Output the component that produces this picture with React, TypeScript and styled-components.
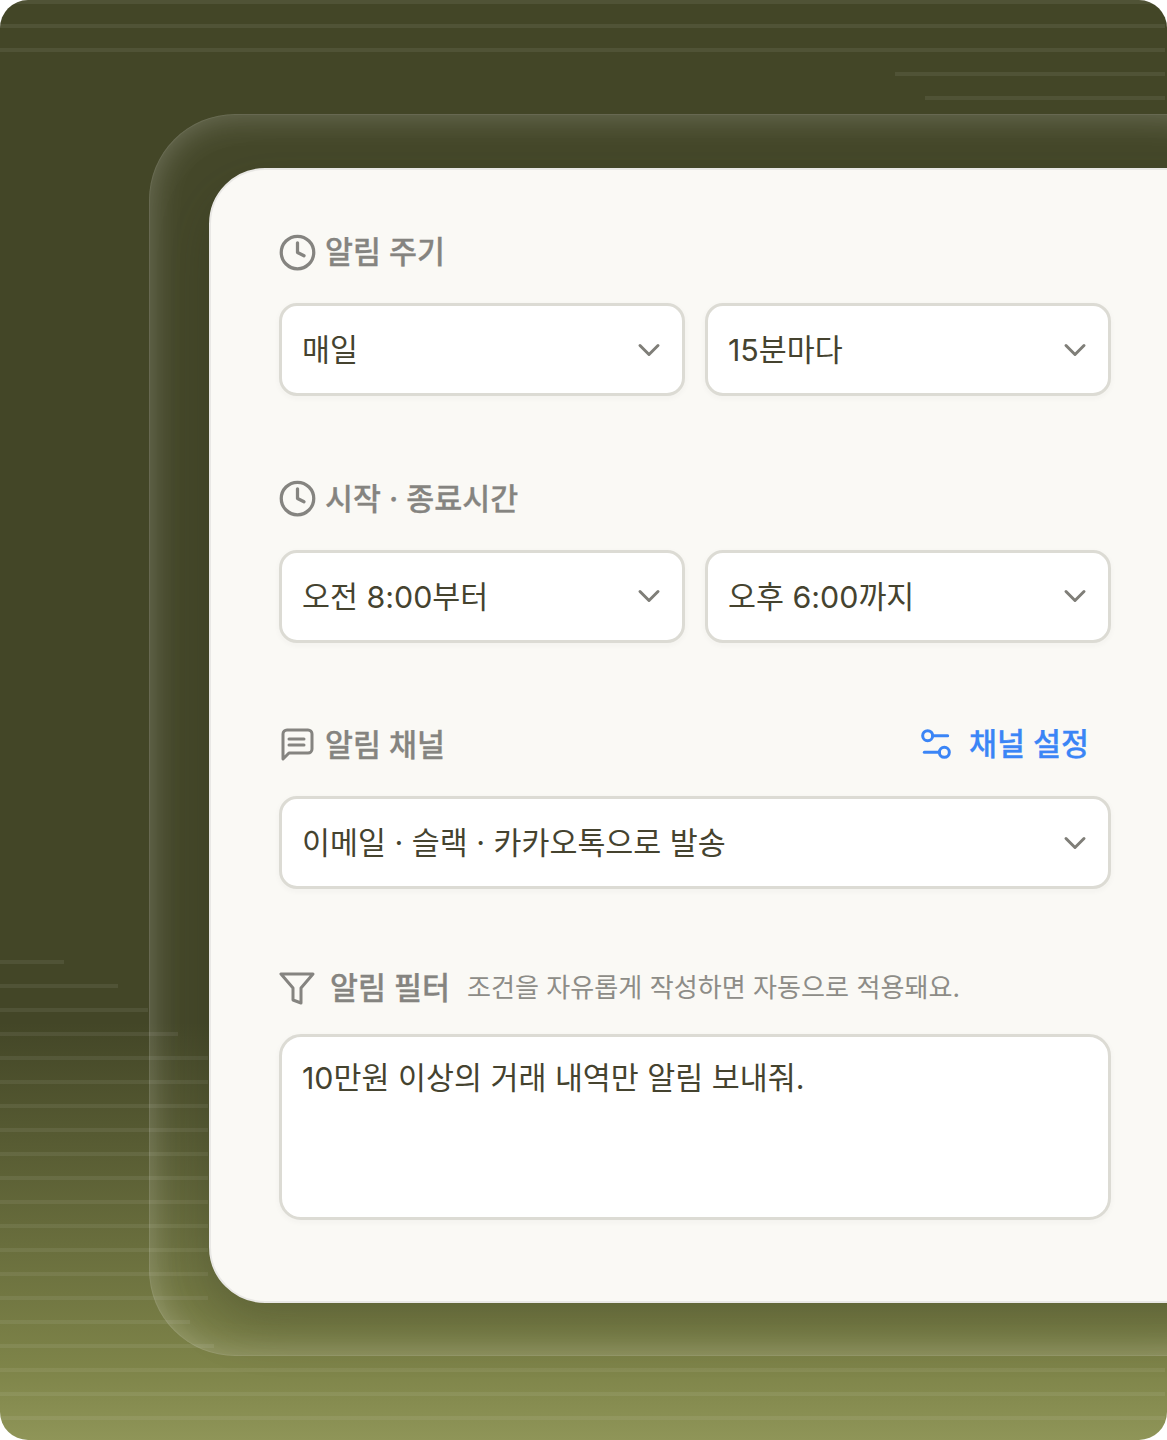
import React from "react";
import styled, { createGlobalStyle } from "styled-components";
import { ChevronDown, Clock, Settings2 } from "lucide-react";

const Global = createGlobalStyle`
  html, body { margin: 0; padding: 0; background: #fff; }
  * { box-sizing: border-box; }
  body { font-family: Inter, "Noto Sans CJK KR", sans-serif; }
`;

const Scene = styled.div`
  position: relative;
  width: 1167px;
  height: 1440px;
  border-radius: 28px;
  overflow: hidden;
  padding: 114px 0 0 149px;
  background: linear-gradient(180deg, #434627 0%, #434627 71%, #7e8449 95%, #8f9558 100%);
`;

const Stripes = styled.div`
  position: absolute;
  inset: 0;
  display: flex;
  flex-direction: column;
  padding-right: 2px;
`;

const Stripe = styled.div<{ $left?: number; $width?: number; $top?: number }>`
  height: 4px;
  flex: none;
  margin-top: ${(p) => p.$top ?? 20}px;
  margin-left: ${(p) => p.$left ?? 0}px;
  width: ${(p) => (p.$width ? `${p.$width}px` : "auto")};
  background: rgba(255, 255, 255, 0.07);
`;

const Glass = styled.div`
  position: relative;
  width: 1100px;
  height: 1242px;
  padding: 54px 0 0 60px;
  border-radius: 86px;
  background: rgba(255, 255, 255, 0.015);
  box-shadow: inset 0 0 34px rgba(255, 255, 255, 0.26), inset 0 0 0 1px rgba(255, 255, 255, 0.07);
`;

const Card = styled.div`
  width: 1060px;
  height: 1135px;
  padding: 59px 0 0 68px;
  border-radius: 56px;
  background: #faf9f5;
  border: 2px solid #e9e8e5;
  box-shadow: 0 22px 50px rgba(40, 44, 20, 0.28);
  display: flex;
  flex-direction: column;
`;

const Section = styled.section<{ $gap?: number; $bottom?: number }>`
  width: 832px;
  display: flex;
  flex-direction: column;
  gap: ${(p) => p.$gap ?? 30}px;
  margin-bottom: ${(p) => p.$bottom ?? 79.5}px;
`;

const Heading = styled.div`
  height: 44px;
  padding-top: 2px;
  display: flex;
  align-items: center;
  color: #858480;
  font-size: 30.4px;
  font-weight: 500;
  -webkit-text-stroke: 0.3px currentColor;
  line-height: 42px;
  white-space: nowrap;
`;

const HeadingIcon = styled.span`
  width: 36px;
  height: 36px;
  flex: none;
  margin-right: 10px;
  display: flex;
  align-items: center;
  justify-content: center;
  color: #858480;

  svg {
    flex: none;
  }
`;

const FilterIcon = styled(HeadingIcon)`
  margin-right: 15px;
`;

const Hint = styled.span`
  margin-left: 17px;
  font-size: 26.1px;
  font-weight: 400;
  -webkit-text-stroke: 0;
  color: #8d8c87;
`;

const ChannelLink = styled.a`
  margin-left: auto;
  margin-right: 22px;
  margin-top: -2px;
  display: flex;
  align-items: center;
  gap: 13px;
  color: #3b85f6;
  font-weight: 500;
`;

const Row = styled.div`
  display: grid;
  grid-template-columns: repeat(2, 406px);
  gap: 20px;
`;

const Select = styled.div`
  height: 93px;
  padding: 0 15px 0 20px;
  display: flex;
  align-items: center;
  justify-content: space-between;
  background: #fff;
  border: 3px solid #dcdbd4;
  border-radius: 18px;
  box-shadow: 0 2px 6px rgba(60, 60, 40, 0.04);
  color: #45432f;
  font-size: 30.4px;
  white-space: nowrap;
`;

const Label = styled.span`
  margin-top: -3px;
`;

const Chevron = styled(ChevronDown)`
  color: #7f7e78;
  flex: none;
`;

const TextBox = styled.div`
  height: 186px;
  padding: 18px 20px;
  background: #fff;
  border: 3px solid #dcdbd4;
  border-radius: 22px;
  box-shadow: 0 2px 6px rgba(60, 60, 40, 0.04);
  color: #45432f;
  font-size: 30.4px;
  line-height: 46px;
`;

const Drop = ({ children }: { children: React.ReactNode }) => (
  <Select>
    <Label>{children}</Label>
    <Chevron size={36} strokeWidth={2} />
  </Select>
);

const topLines = [{}, {}, {}, { $left: 895 }, { $left: 925 }];
const bottomWidths = [64, 118, 148, 178, 208, 208, 208, 208, 208, 208, 208, 208, 208, 208, 208, 190, 214];

export default function App() {
  return (
    <>
      <Global />
      <Scene>
        <Stripes>
          {topLines.map((l, i) => (
            <Stripe key={i} {...l} $top={i === 0 ? 0 : 20} />
          ))}
          {bottomWidths.map((w, i) => (
            <Stripe key={i} $width={w} $top={i === 0 ? 860 : 20} />
          ))}
          <Stripe />
          <Stripe />
          <Stripe />
        </Stripes>
        <Glass>
          <Card>
            <Section>
              <Heading>
                <HeadingIcon>
                  <Clock size={39} strokeWidth={2} />
                </HeadingIcon>
                알림 주기
              </Heading>
              <Row>
                <Drop>매일</Drop>
                <Drop>15분마다</Drop>
              </Row>
            </Section>
            <Section>
              <Heading>
                <HeadingIcon>
                  <Clock size={39} strokeWidth={2} />
                </HeadingIcon>
                시작 · 종료시간
              </Heading>
              <Row>
                <Drop>오전 8:00부터</Drop>
                <Drop>오후 6:00까지</Drop>
              </Row>
            </Section>
            <Section $bottom={76}>
              <Heading>
                <HeadingIcon>
                  <svg width="36" height="36" viewBox="0 0 36 36" fill="none" stroke="currentColor" strokeWidth="3" strokeLinejoin="round" strokeLinecap="round">
                    <path d="M4 32V7a4 4 0 0 1 4-4h21a4 4 0 0 1 4 4v15a4 4 0 0 1-4 4H10z" />
                    <path d="M10 12h15M10 18h15" />
                  </svg>
                </HeadingIcon>
                알림 채널
                <ChannelLink>
                  <Settings2 size={40} strokeWidth={1.8} />
                  채널 설정
                </ChannelLink>
              </Heading>
              <Drop>이메일 · 슬랙 · 카카오톡으로 발송</Drop>
            </Section>
            <Section $gap={25} $bottom={0}>
              <Heading>
                <FilterIcon>
                  <svg width="36" height="36" viewBox="0 0 36 36" fill="none" stroke="currentColor" strokeWidth="3" strokeLinejoin="round" strokeLinecap="round">
                    <path d="M2 4h32L22 18v15l-8-3V18z" />
                  </svg>
                </FilterIcon>
                알림 필터
                <Hint>조건을 자유롭게 작성하면 자동으로 적용돼요.</Hint>
              </Heading>
              <TextBox>10만원 이상의 거래 내역만 알림 보내줘.</TextBox>
            </Section>
          </Card>
        </Glass>
      </Scene>
    </>
  );
}
